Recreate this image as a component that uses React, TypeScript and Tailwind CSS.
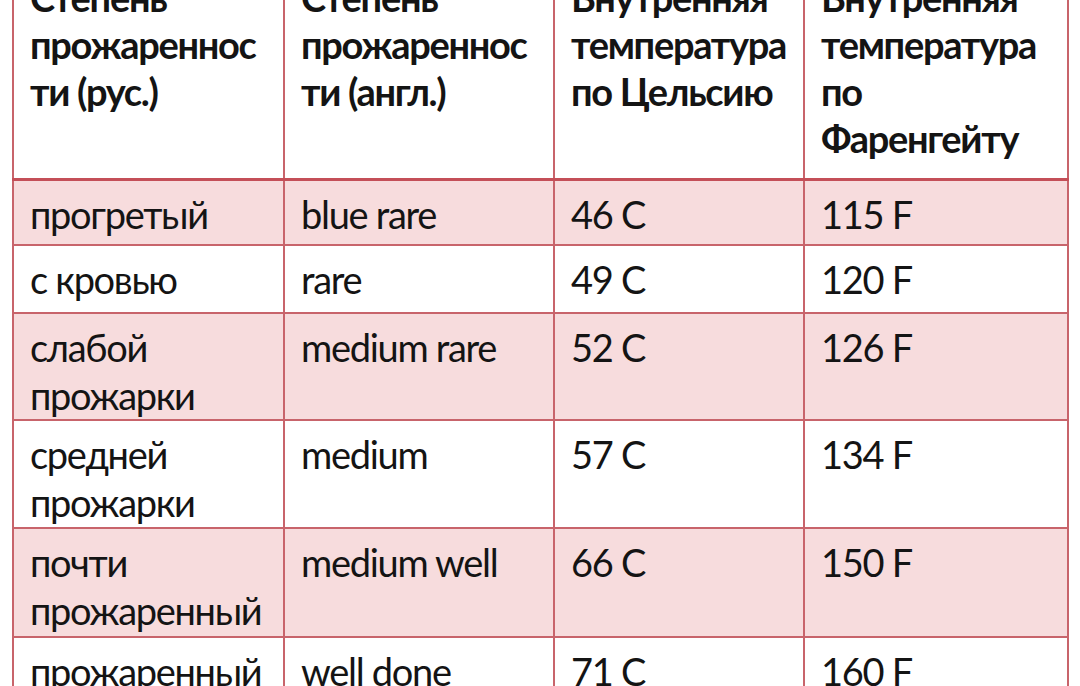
import React from "react";

type Row = {
    ru: string[];
    en: string;
    c: string;
    f: string;
    h: string;
};

const rows: Row[] = [
    { ru: ["прогретый"], en: "blue rare", c: "46 C", f: "115 F", h: "h-[66px]" },
    { ru: ["с кровью"], en: "rare", c: "49 C", f: "120 F", h: "h-[68px]" },
    { ru: ["слабой", "прожарки"], en: "medium rare", c: "52 C", f: "126 F", h: "h-[107px]" },
    { ru: ["средней", "прожарки"], en: "medium", c: "57 C", f: "134 F", h: "h-[108px]" },
    { ru: ["почти", "прожаренный"], en: "medium well", c: "66 C", f: "150 F", h: "h-[109px]" },
    { ru: ["прожаренный"], en: "well done", c: "71 C", f: "160 F", h: "h-[108px]" },
];

const headers: string[][] = [
    ["Степень", "прожареннос", "ти (рус.)"],
    ["Степень", "прожареннос", "ти (англ.)"],
    ["Внутренняя", "температура", "по Цельсию"],
    ["Внутренняя", "температура", "по", "Фаренгейту"],
];

function Lines({ lines }: { lines: string[] }) {
    return (
        <>
            {lines.map((l, i) => (
                <div key={i} className="whitespace-nowrap">
                    {l}
                </div>
            ))}
        </>
    );
}

export default function App() {
    const cell = "border-2 border-[#c8646b] align-top pl-[16px] pt-[9px]";

    return (
        <div
            className="w-[1080px] h-[686px] overflow-hidden bg-white text-[#141414]"
            style={{ fontFamily: '"Lato", "Open Sans", "Noto Sans", sans-serif' }}
        >
            <table className="ml-[12px] -mt-[40px] w-[1055px] table-fixed border-collapse text-[38px] leading-[48px] tracking-[-1.3px]">
                <colgroup>
                    <col className="w-[271px]" />
                    <col className="w-[270px]" />
                    <col className="w-[250px]" />
                    <col className="w-[264px]" />
                </colgroup>
                <thead>
                    <tr className="h-[218px]">
                        {headers.map((h, i) => (
                            <th
                                key={i}
                                className="border-2 border-b-[3px] border-[#c8646b] border-b-[#c44f58] align-top pl-[16px] pt-[12px] text-left font-bold leading-[47px]"
                            >
                                <Lines lines={h} />
                            </th>
                        ))}
                    </tr>
                </thead>
                <tbody>
                    {rows.map((r, i) => (
                        <tr key={i} className={`${r.h} ${i % 2 === 0 ? "bg-[#f7dcdd]" : "bg-white"}`}>
                            <td className={cell}>
                                <Lines lines={r.ru} />
                            </td>
                            <td className={cell}>{r.en}</td>
                            <td className={cell}>{r.c}</td>
                            <td className={cell}>{r.f}</td>
                        </tr>
                    ))}
                </tbody>
            </table>
        </div>
    );
}
